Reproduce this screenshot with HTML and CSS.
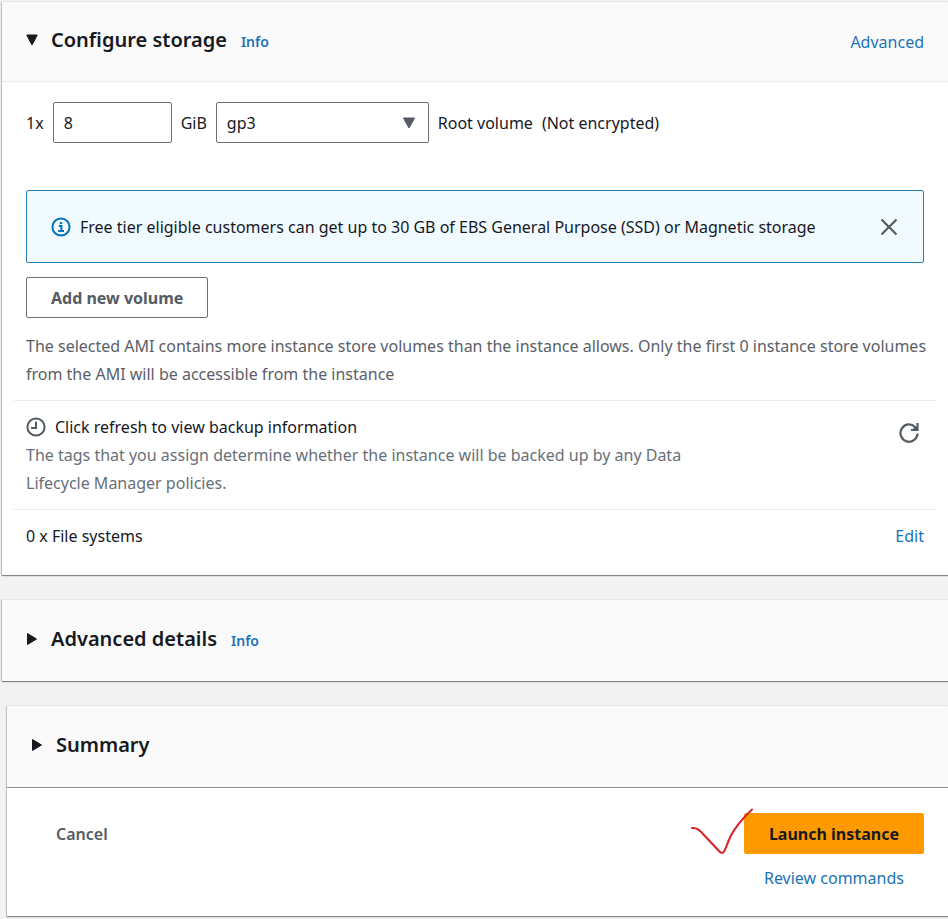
FILE: index.html
```html
<!DOCTYPE html>
<html lang="en">
<head>
<meta charset="utf-8">
<meta name="viewport" content="width=device-width, initial-scale=1">
<title>Launch an instance</title>
<link rel="stylesheet" href="styles.css">
</head>
<body>
<main class="page">
  <section class="card">
    <header class="card-header ruled">
      <button class="toggle" type="button" aria-expanded="true" aria-label="Configure storage section">
        <svg width="12" height="12" viewBox="0 0 12 12"><path d="M.8 1h10.400L6 11z" fill="currentColor" stroke="currentColor" stroke-linejoin="round"/></svg>
      </button>
      <h2>Configure storage</h2>
      <a class="info" href="#">Info</a>
      <a class="end" href="#">Advanced</a>
    </header>
    <div class="card-body">
      <div class="volume">
        <label for="size">1x</label>
        <input id="size" class="field size" type="text" value="8">
        <label for="type">GiB</label>
        <div class="select">
          <select id="type" class="field"><option>gp3</option></select>
          <svg class="caret" width="14" height="12" viewBox="0 0 14 12"><path d="M1.4 1h11.2L7 11z" fill="currentColor" stroke="currentColor" stroke-linejoin="round"/></svg>
        </div>
        <span>Root volume</span>
        <span>(Not encrypted)</span>
      </div>
      <div class="alert">
        <svg class="alert-icon" width="20" height="20" viewBox="0 0 20 20" fill="none" stroke="currentColor" stroke-width="2"><circle cx="10" cy="10" r="8.6"/><path d="M7.800 9h2.600v5M7.200 14h5.800M8.800 5.900h2.400"/></svg>
        <p>Free tier eligible customers can get up to 30 GB of EBS General Purpose (SSD) or Magnetic storage</p>
        <button class="icon-button" type="button" aria-label="Dismiss">
          <svg width="18" height="18" viewBox="0 0 18 18" fill="none" stroke="currentColor" stroke-width="2.2"><path d="M1.500 1.500l15 15M16.500 1.500l-15 15"/></svg>
        </button>
      </div>
      <button class="button" type="button">Add new volume</button>
      <p class="note">The selected AMI contains more instance store volumes than the instance allows. Only the first 0 instance store volumes from the AMI will be accessible from the instance</p>
    </div>
    <div class="row">
      <div class="backup">
        <p class="backup-title">
          <svg width="20" height="20" viewBox="0 0 20 20" fill="none" stroke="currentColor" stroke-width="2"><circle cx="10" cy="10" r="8.6"/><path d="M10 4.500v6.500H5"/></svg>
          <span>Click refresh to view backup information</span>
        </p>
        <p class="hint">The tags that you assign determine whether the instance will be backed up by any Data Lifecycle Manager policies.</p>
      </div>
      <button class="icon-button refresh" type="button" aria-label="Refresh">
        <svg width="20" height="22" viewBox="0 0 20 22" fill="none" stroke="currentColor" stroke-width="2.2"><path d="M18.500 11.500a8.500 8.700 0 1 1-2.500-6.600l2.200 2.300"/><path d="M18.500 1v7H12"/><path d="M14.500 6.500h3" /></svg>
      </button>
    </div>
    <div class="row files">
      <span>0 x File systems</span>
      <a href="#">Edit</a>
    </div>
  </section>

  <section class="card">
    <header class="card-header">
      <button class="toggle" type="button" aria-expanded="false" aria-label="Advanced details section">
        <svg width="12" height="14" viewBox="0 0 12 14"><path d="M1.500 1.500v11l9-5.500z" fill="currentColor" stroke="currentColor" stroke-linejoin="round"/></svg>
      </button>
      <h2>Advanced details</h2>
      <a class="info" href="#">Info</a>
    </header>
  </section>

  <section class="card summary">
    <header class="card-header">
      <button class="toggle" type="button" aria-expanded="false" aria-label="Summary section">
        <svg width="12" height="14" viewBox="0 0 12 14"><path d="M1.500 1.500v11l9-5.500z" fill="currentColor" stroke="currentColor" stroke-linejoin="round"/></svg>
      </button>
      <h2>Summary</h2>
    </header>
    <footer class="actions">
      <button class="cancel" type="button">Cancel</button>
      <div class="launch">
        <button class="button primary" type="button">Launch instance</button>
        <a href="#">Review commands</a>
        <svg class="tick" width="64" height="48" viewBox="0 0 64 48" fill="none"><path d="M2 20c5-.5 8 2 11 6l16 17c1.500 1.800 3.500 3 5 .5 2-3 3-8 7-16C46 18 53 10 62 1.500" stroke="#d9202a" stroke-width="2" stroke-linecap="round" stroke-linejoin="round"/></svg>
      </div>
    </footer>
  </section>
</main>
</body>
</html>
```

FILE: styles.css
```css
* { box-sizing: border-box; }

body {
  margin: 0;
  background: #f2f2f2;
  color: #16191f;
  font: 16px/28px "Noto Sans", "Open Sans", sans-serif;
}

h2, p { margin: 0; }

button, input, select { font: inherit; color: inherit; }

button { cursor: pointer; }

svg { display: block; flex: none; }

a { color: #1a73b8; text-decoration: none; }

.page {
  display: flex;
  flex-direction: column;
  gap: 25px;
  padding: 2px 0 2px 2px;
}

.card {
  background: #fff;
  box-shadow: 0 1px 1px #7d868c, -1px 0 1px #c8cccf, 0 -1px 0 #eaeded;
}

.summary { margin-left: 5px; }

.card-header {
  display: flex;
  align-items: center;
  min-height: 81px;
  padding: 0 24px 4px;
  background: #fafafa;
}

.ruled {
  min-height: 80px;
  border-bottom: 1px solid #eaeded;
}

.toggle {
  width: 12px;
  margin-right: 13px;
  padding: 0;
  border: 0;
  background: none;
}

h2 {
  font-size: 20px;
  font-weight: 600;
}

.info {
  margin: 4px 0 0 14px;
  font-size: 14px;
  font-weight: 600;
}

.end { margin: 4px 0 0 auto; }

.card-body { padding: 20px 24px 12px; }

.volume {
  display: flex;
  align-items: center;
  gap: 9px;
}

.field {
  height: 41px;
  padding: 0 10px;
  border: 1px solid #687078;
  border-radius: 2px;
  background: #fff;
}

.size { width: 119px; }

.select {
  position: relative;
  width: 213px;
}

.select .field {
  display: block;
  width: 100%;
  appearance: none;
}

.caret {
  position: absolute;
  top: 15px;
  right: 13px;
  color: #545b64;
  pointer-events: none;
}

.alert {
  display: flex;
  align-items: center;
  gap: 9px;
  min-height: 73px;
  margin: 47px 0 14px;
  padding: 0 25px 0 24px;
  border: 1px solid #2a80b5;
  border-radius: 2px;
  background: #f1faff;
}

.alert-icon { color: #0073bb; }

.alert p { flex: 1; }

.icon-button {
  padding: 0;
  border: 0;
  background: none;
  color: #545b64;
}

.button {
  height: 41px;
  padding: 0 24px;
  border: 1px solid #687078;
  border-radius: 2px;
  background: #fff;
  color: #545b64;
  font-weight: 700;
}

.note {
  margin: 14px -12px 0 0;
  color: #5a6068;
}

.row {
  display: flex;
  align-items: flex-start;
  justify-content: space-between;
  margin: 0 12px;
  padding: 12px;
  border-top: 1px solid #eaeded;
}

.backup { max-width: 680px; }

.backup-title {
  display: flex;
  align-items: center;
  gap: 9px;
}

.backup-title svg { color: #545b64; }

.hint { color: #687078; }

.refresh { margin: 9px 5px 0 0; }

.files { padding-bottom: 25px; }

.actions {
  display: flex;
  align-items: flex-start;
  justify-content: space-between;
  padding: 25px 24px 24px 49px;
  border-top: 1px solid #879596;
}

.cancel {
  height: 41px;
  padding: 0;
  border: 0;
  background: none;
  color: #545b64;
  font-weight: 600;
}

.launch {
  position: relative;
  display: flex;
  flex-direction: column;
  align-items: center;
  gap: 10px;
}

.primary {
  border-color: #ff9900;
  background: #ff9900;
  color: #16191f;
}

.tick {
  position: absolute;
  top: -5px;
  left: -54px;
  pointer-events: none;
}
```
